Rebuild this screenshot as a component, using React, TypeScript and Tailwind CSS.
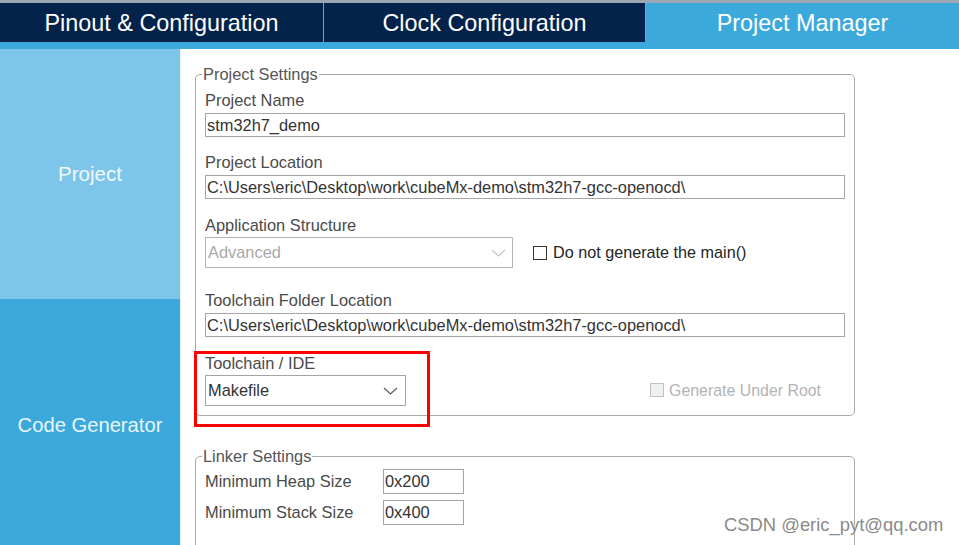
const Chevron = ({ color }: { color: string }) => (
  <svg width="15" height="8" viewBox="0 0 15 8" fill="none">
    <polyline points="1,1 7.5,7 14,1" stroke={color} strokeWidth="1.2" />
  </svg>
)

function Field({ label, value, mt }: { label: string; value: string; mt: string }) {
  return (
    <>
      <div className={`${mt} h-[20px] leading-[20px] text-[#4a4a4a]`}>{label}</div>
      <div className="mt-[3px] flex h-[24px] items-center border border-[#a5a5a5] bg-white pl-[1px] text-[#333]">
        {value}
      </div>
    </>
  )
}

export default function App() {
  return (
    <div className="relative h-[545px] w-[959px] overflow-hidden bg-white font-['Liberation_Sans',Arial,sans-serif] text-[16.4px]">
      {/* top tabs */}
      <div className="h-[3px] bg-[#9ca7b6]" />
      <div className="flex h-[46px] bg-[#3ba9dc]">
        <div className="flex h-[39px] w-[324px] items-center justify-center border-r border-[#8c98ab] bg-[#03234b] pt-[3px] text-[23.4px] text-white">
          Pinout &amp; Configuration
        </div>
        <div className="flex h-[39px] w-[322px] items-center justify-center border-r border-[#8c98ab] bg-[#03234b] pt-[3px] text-[23.4px] text-white">
          Clock Configuration
        </div>
        <div className="flex h-[39px] flex-1 items-center justify-center pt-[3px] text-[23.4px] text-white">
          Project Manager
        </div>
      </div>

      <div className="flex h-[496px]">
        {/* sidebar */}
        <div className="flex w-[180px] flex-col">
          <div className="flex h-[250px] items-center justify-center bg-[#7dc6ea] pt-[1px] text-[20.5px] text-[#f2f9fd]">
            Project
          </div>
          <div className="flex flex-1 items-center justify-center bg-[#3ba9dc] pt-[6px] text-[20.2px] text-[#eaf6fc]">
            Code Generator
          </div>
        </div>

        {/* main */}
        <div className="relative flex-1 border-l border-[#e3f1f9] pl-[14px] pt-[15px]">
          <fieldset className="w-[660px] rounded-[5px] border border-[#a9a9a9] pb-[9px]">
            <legend className="ml-[6px] px-[1px] leading-[20px] text-[#555]">Project Settings</legend>
            <div className="px-[9px]">
              <Field label="Project Name" value="stm32h7_demo" mt="mt-[6px]" />
              <Field
                label="Project Location"
                value="C:\Users\eric\Desktop\work\cubeMx-demo\stm32h7-gcc-openocd\"
                mt="mt-[15px]"
              />

              <div className="mt-[16px] h-[20px] leading-[20px] text-[#4a4a4a]">Application Structure</div>
              <div className="mt-[2px] flex items-center">
                <div className="flex h-[31px] w-[308px] items-center justify-between border border-[#b4b4b4] pl-[2px] pr-[6px] text-[#a8a8a8]">
                  <span>Advanced</span>
                  <Chevron color="#c4c4c4" />
                </div>
                <div className="ml-[20px] h-[14px] w-[14px] border border-[#333] bg-white" />
                <span className="ml-[6px] text-[16.2px] text-[#262626]">Do not generate the main()</span>
              </div>

              <Field
                label="Toolchain Folder Location"
                value="C:\Users\eric\Desktop\work\cubeMx-demo\stm32h7-gcc-openocd\"
                mt="mt-[22px]"
              />

              <div className="mt-[16px] h-[20px] leading-[20px] text-[#4a4a4a]">Toolchain / IDE</div>
              <div className="mt-[2px] flex items-center">
                <div className="flex h-[31px] w-[201px] items-center justify-between border border-[#a5a5a5] pl-[2px] pr-[7px] text-[#333]">
                  <span>Makefile</span>
                  <Chevron color="#5a5a5a" />
                </div>
                <div className="ml-auto flex items-center pr-[24px]">
                  <div className="h-[14px] w-[14px] border border-[#c2c2c2] bg-[#f0f0f0]" />
                  <span className="ml-[5px] text-[15.9px] text-[#b3b3b3]">Generate Under Root</span>
                </div>
              </div>
            </div>
          </fieldset>

          <fieldset className="mt-[30px] w-[660px] rounded-[5px] border border-[#a9a9a9] pb-[40px]">
            <legend className="ml-[6px] px-[1px] leading-[20px] text-[#555]">Linker Settings</legend>
            <div className="px-[9px]">
              <div className="mt-[3px] flex h-[25px] items-center">
                <span className="w-[178px] text-[#4a4a4a]">Minimum Heap Size</span>
                <div className="flex h-[25px] w-[81px] items-center border border-[#a5a5a5] pl-[1px] text-[#333]">0x200</div>
              </div>
              <div className="mt-[6px] flex h-[25px] items-center">
                <span className="w-[178px] text-[#4a4a4a]">Minimum Stack Size</span>
                <div className="flex h-[25px] w-[81px] items-center border border-[#a5a5a5] pl-[1px] text-[#333]">0x400</div>
              </div>
            </div>
          </fieldset>

          {/* annotation */}
          <div className="absolute left-[13px] top-[302px] h-[76px] w-[236px] border-[3px] border-[#ff0000]" />
        </div>
      </div>

      <div className="absolute left-[724px] top-[514px] text-[18.4px] leading-[22px] text-[#8a8a8a] [text-shadow:0_0_2px_#fff,0_0_1px_#fff]">
        CSDN @eric_pyt@qq.com
      </div>
    </div>
  )
}
